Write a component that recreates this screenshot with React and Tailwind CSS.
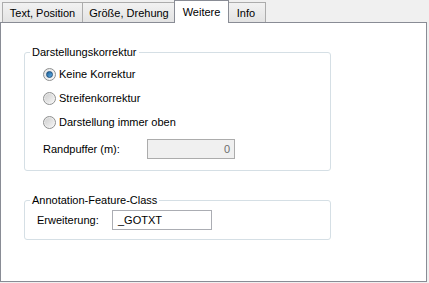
import React from "react";

const font = { fontFamily: '"Liberation Sans", Arial, sans-serif' };

function Tab({ label, selected, className = "" }) {
  if (selected) {
    return (
      <div
        className={`relative z-10 -mb-px -mx-[2px] flex h-[23px] items-start justify-center border border-b-0 border-[#898c95] bg-white pt-[3px] ${className}`}
      >
        {label}
      </div>
    );
  }
  return (
    <div
      className={`flex h-[20px] items-center justify-center border border-b-0 border-[#acacac] bg-gradient-to-b from-[#f2f2f2] to-[#e3e3e3] pt-[1px] ${className}`}
    >
      {label}
    </div>
  );
}

function Radio({ checked, label }) {
  return (
    <div className="flex h-[24px] items-center gap-[3px] pl-[18px]">
      <span className="flex h-[13px] w-[13px] items-center justify-center rounded-full border border-[#8e8f8f] bg-gradient-to-br from-[#e4e4e4] to-[#f8f8f8]">
        {checked ? (
          <span className="h-[7px] w-[7px] rounded-full border border-[#1c4f7e] bg-gradient-to-br from-[#1f5f96] to-[#5fb0e8]" />
        ) : (
          <span className="h-[9px] w-[9px] rounded-full bg-gradient-to-br from-[#d0d0d0] to-[#f4f4f4]" />
        )}
      </span>
      <span>{label}</span>
    </div>
  );
}

export default function App() {
  return (
    <div
      className="h-[283px] w-[429px] overflow-hidden bg-[#f0f0f0] text-[11px] text-black"
      style={font}
    >
      <div className="flex h-[22px] items-end pl-[2px]">
        <Tab label="Text, Position" className="w-[81px]" />
        <Tab label="Größe, Drehung" className="w-[94px] -ml-px" />
        <Tab label="Weitere" selected className="w-[55px]" />
        <Tab label="Info" className="w-[40px] -ml-px" />
      </div>
      <div className="h-[260px] w-[427px] border border-[#898c95] bg-white pl-[23px] pt-[23px]">
        <fieldset className="w-[307px] rounded-[3px] border border-[#d5dfe5] pb-[11px]">
          <legend className="ml-[5px] px-[2px] leading-[13px]">Darstellungskorrektur</legend>
          <div className="pt-[3px]">
            <Radio checked label="Keine Korrektur" />
            <Radio label="Streifenkorrektur" />
            <Radio label="Darstellung immer oben" />
            <div className="mt-[5px] flex items-center pl-[18px]">
              <span className="w-[104px]">Randpuffer (m):</span>
              <div className="flex h-[20px] w-[88px] items-center justify-end border border-[#acacac] bg-[#f0f0f0] pr-[4px] text-[#6d6d6d]">
                0
              </div>
            </div>
          </div>
        </fieldset>
        <fieldset className="mt-[23px] w-[307px] rounded-[3px] border border-[#d5dfe5] pb-[9px]">
          <legend className="ml-[5px] px-[2px] leading-[13px]">Annotation-Feature-Class</legend>
          <div className="flex items-center pl-[12px] pt-[3px]">
            <span className="w-[75px]">Erweiterung:</span>
            <div className="flex h-[20px] w-[100px] items-center border border-[#abadb3] bg-white pl-[5px]">
              _GOTXT
            </div>
          </div>
        </fieldset>
      </div>
    </div>
  );
}
